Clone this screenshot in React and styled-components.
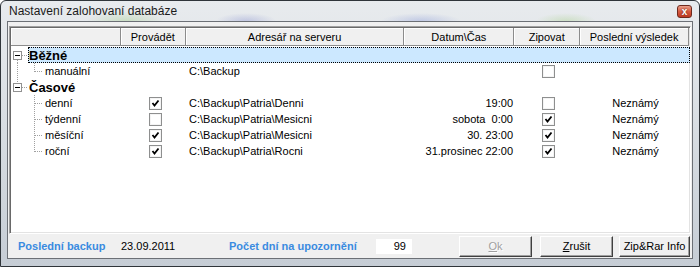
import React from "react";
import styled, { createGlobalStyle } from "styled-components";

const GlobalStyle = createGlobalStyle`
  html, body { margin: 0; padding: 0; background: #ffffff; }
  body { font-family: "Liberation Sans", Arial, sans-serif; font-size: 11px; }
`;

const Window = styled.div`
  width: 700px;
  height: 267px;
  box-sizing: border-box;
  border: 1px solid #30353a;
  border-radius: 6px 6px 0 0;
  background:
    radial-gradient(ellipse 40px 10px at 125px 20px, rgba(150, 200, 120, 0.35), transparent),
    radial-gradient(ellipse 30px 8px at 245px 20px, rgba(110, 120, 200, 0.3), transparent),
    radial-gradient(ellipse 40px 8px at 420px 20px, rgba(110, 130, 210, 0.3), transparent),
    radial-gradient(ellipse 30px 8px at 565px 20px, rgba(150, 200, 110, 0.3), transparent),
    linear-gradient(180deg, #e8ebee 0%, #d9dee3 45%, #c6cdd5 100%);
  display: flex;
  flex-direction: column;
`;

const TitleBar = styled.div`
  height: 20px;
  display: flex;
  align-items: center;
  justify-content: space-between;
  padding: 0 7px 0 8px;
  color: #1b1b1b;
  font-size: 12px;
`;

const CloseButton = styled.div`
  width: 15px;
  height: 13px;
  align-self: flex-start;
  margin-top: 4px;
  box-sizing: border-box;
  border: 1px solid #6e2a1e;
  border-radius: 3px;
  background: linear-gradient(180deg, #eaa08c 0%, #d65a40 50%, #c03a22 100%);
  color: #fff;
  font: bold 10px "Liberation Sans", Arial, sans-serif;
  display: flex;
  align-items: center;
  justify-content: center;
  line-height: 1;
  text-shadow: 0 0 2px #5a1a10;
`;

const Client = styled.div`
  flex: 1;
  margin: 0 6px 7px 6px;
  border: 1px solid #6c7076;
  background: #f0f0f0;
  padding: 4px 1px 0 1px;
  display: flex;
  flex-direction: column;
`;

const Grid = styled.div`
  flex: 1;
  background: #fff;
  border-top: 1px solid #a0a0a0;
  border-left: 1px solid #a0a0a0;
  border-right: 1px solid #fff;
  border-bottom: 1px solid #fff;
  box-shadow: inset 1px 1px 0 #696969, inset -1px -1px 0 #e3e3e3;
  padding: 1px;
`;

const Header = styled.div`
  display: flex;
  height: 18px;
  margin-bottom: 1px;
`;

const HeadCell = styled.div`
  width: ${(p) => p.w}px;
  box-sizing: border-box;
  background: #f0f0f0;
  border-right: 1px solid #8c8c8c;
  border-bottom: 1px solid #8c8c8c;
  box-shadow: inset 1px 1px 0 #fff;
  display: flex;
  align-items: center;
  justify-content: center;
  color: #000;
`;

const Row = styled.div`
  display: flex;
  height: 16px;
`;

const Gutter = styled.div`
  width: 17px;
  flex: none;
  display: flex;
`;

const Body = styled.div`
  display: flex;
  height: 16px;
  box-sizing: border-box;
  background: ${(p) => (p.selected ? "#cce8ff" : "transparent")};
  outline: ${(p) => (p.selected ? "1px dotted #000" : "none")};
  outline-offset: -1px;
`;

const Cell = styled.div`
  width: ${(p) => p.w}px;
  flex: none;
  display: flex;
  align-items: center;
  justify-content: ${(p) => p.align || "flex-start"};
  padding: ${(p) => p.pad || "0"};
  box-sizing: border-box;
  white-space: pre;
  color: #000;
  font-weight: ${(p) => (p.bold ? "bold" : "normal")};
  font-size: ${(p) => (p.bold ? "13px" : "11px")};
`;

const Footer = styled.div`
  height: 24px;
  display: flex;
  align-items: center;
  padding-left: 9px;
`;

const FieldLabel = styled.div`
  width: ${(p) => p.w}px;
  color: #3a8be0;
  font-weight: bold;
  font-size: 11px;
  flex: none;
`;

const FieldValue = styled.div`
  width: ${(p) => p.w}px;
  color: #000;
  flex: none;
`;

const NumberBox = styled.div`
  width: 36px;
  height: 15px;
  background: #fff;
  display: flex;
  align-items: center;
  justify-content: flex-end;
  padding-right: 6px;
  box-sizing: border-box;
  color: #000;
  margin-right: 47px;
  flex: none;
`;

const Button = styled.div`
  width: ${(p) => p.w}px;
  height: 21px;
  box-sizing: border-box;
  margin-left: ${(p) => p.gap || 0}px;
  background: #f0f0f0;
  border-top: 1px solid #fff;
  border-left: 1px solid #fff;
  border-right: 1px solid #404040;
  border-bottom: 1px solid #404040;
  box-shadow: inset -1px -1px 0 #a0a0a0;
  display: flex;
  align-items: center;
  justify-content: center;
  color: ${(p) => (p.disabled ? "#a0a0a0" : "#000")};
  text-shadow: ${(p) => (p.disabled ? "1px 1px 0 #fff" : "none")};
  flex: none;
`;

const cols = [110, 65, 219, 110, 66, 109];
const bodyCols = [93, 65, 219, 110, 66, 109];

const Checkbox = ({ checked }) => (
  <svg width="13" height="13" viewBox="0 0 13 13">
    <rect x="0.5" y="0.5" width="12" height="12" fill="#fff" stroke="#8e8f8f" />
    <rect x="1.5" y="1.5" width="10" height="10" fill="none" stroke="#f4f4f4" />
    {checked && (
      <path d="M3.5 6 L5.5 8.5 L9.5 3.5" fill="none" stroke="#000" strokeWidth="1.8" />
    )}
  </svg>
);

const RootLines = ({ box, up, down }) => (
  <svg width="17" height="16" viewBox="0 0 17 16" shapeRendering="crispEdges">
    {up && <line x1="6.5" y1="0" x2="6.5" y2={box ? 4 : 16} stroke="#a0a0a0" strokeDasharray="1 1" />}
    {down && <line x1="6.5" y1={box ? 13 : 0} x2="6.5" y2="16" stroke="#a0a0a0" strokeDasharray="1 1" />}
    {box && (
      <>
        <line x1="11" y1="8.5" x2="17" y2="8.5" stroke="#a0a0a0" strokeDasharray="1 1" />
        <rect x="2.5" y="4.5" width="8" height="8" fill="#fff" stroke="#919191" />
        <line x1="4" y1="8.5" x2="9" y2="8.5" stroke="#000" />
      </>
    )}
  </svg>
);

const ChildLines = ({ last }) => (
  <svg width="17" height="16" viewBox="0 0 17 16" shapeRendering="crispEdges">
    <line x1="6.5" y1="0" x2="6.5" y2={last ? 9 : 16} stroke="#a0a0a0" strokeDasharray="1 1" />
    <line x1="7" y1="8.5" x2="15" y2="8.5" stroke="#a0a0a0" strokeDasharray="1 1" />
  </svg>
);

const rows = [
  { group: true, name: "Běžné", selected: true, down: true },
  { name: "manuální", path: "C:\\Backup", zip: false, last: true, rootLine: true },
  { group: true, name: "Časové", up: true },
  { name: "denní", run: true, path: "C:\\Backup\\Patria\\Denni", time: "19:00", zip: false, result: "Neznámý" },
  { name: "týdenní", run: false, path: "C:\\Backup\\Patria\\Mesicni", time: "sobota  0:00", zip: true, result: "Neznámý" },
  { name: "měsíční", run: true, path: "C:\\Backup\\Patria\\Mesicni", time: "30. 23:00", zip: true, result: "Neznámý" },
  { name: "roční", run: true, path: "C:\\Backup\\Patria\\Rocni", time: "31.prosinec 22:00", zip: true, result: "Neznámý", last: true },
];

const headers = ["", "Provádět", "Adresář na serveru", "Datum\\Čas", "Zipovat", "Poslední výsledek"];

export default function App() {
  return (
    <>
      <GlobalStyle />
      <Window>
        <TitleBar>
          <span>Nastavení zalohovaní databáze</span>
          <CloseButton>x</CloseButton>
        </TitleBar>
        <Client>
          <Grid>
            <Header>
              {headers.map((h, i) => (
                <HeadCell key={i} w={cols[i]}>{h}</HeadCell>
              ))}
            </Header>
            {rows.map((r, i) => (
              <Row key={i}>
                <Gutter>
                  {r.group ? (
                    <RootLines box up={r.up} down={r.down} />
                  ) : (
                    <RootLines up={r.rootLine} />
                  )}
                </Gutter>
                <Body selected={r.selected}>
                  {r.group ? (
                    <Cell w={bodyCols[0]} bold pad="0 0 0 1px">{r.name}</Cell>
                  ) : (
                    <Cell w={bodyCols[0]}>
                      <ChildLines last={r.last} />
                      {r.name}
                    </Cell>
                  )}
                  <Cell w={bodyCols[1]} align="center" pad="0 0 0 4px">
                    {!r.group && r.run !== undefined && <Checkbox checked={r.run} />}
                  </Cell>
                  <Cell w={bodyCols[2]} pad="0 0 0 3px">{r.path}</Cell>
                  <Cell w={bodyCols[3]} align="flex-end" pad="0 2px 0 0">{r.time}</Cell>
                  <Cell w={bodyCols[4]} align="center">
                    {!r.group && <Checkbox checked={r.zip} />}
                  </Cell>
                  <Cell w={bodyCols[5]} align="center">{r.result}</Cell>
                </Body>
              </Row>
            ))}
          </Grid>
          <Footer>
            <FieldLabel w={103}>Poslední backup</FieldLabel>
            <FieldValue w={108}>23.09.2011</FieldValue>
            <FieldLabel w={147}>Počet dní na upozornění</FieldLabel>
            <NumberBox>99</NumberBox>
            <Button w={73} disabled><u>O</u>k</Button>
            <Button w={73} gap={8}><u>Z</u>rušit</Button>
            <Button w={71} gap={6}>Zip&amp;Rar Info</Button>
          </Footer>
        </Client>
      </Window>
    </>
  );
}
